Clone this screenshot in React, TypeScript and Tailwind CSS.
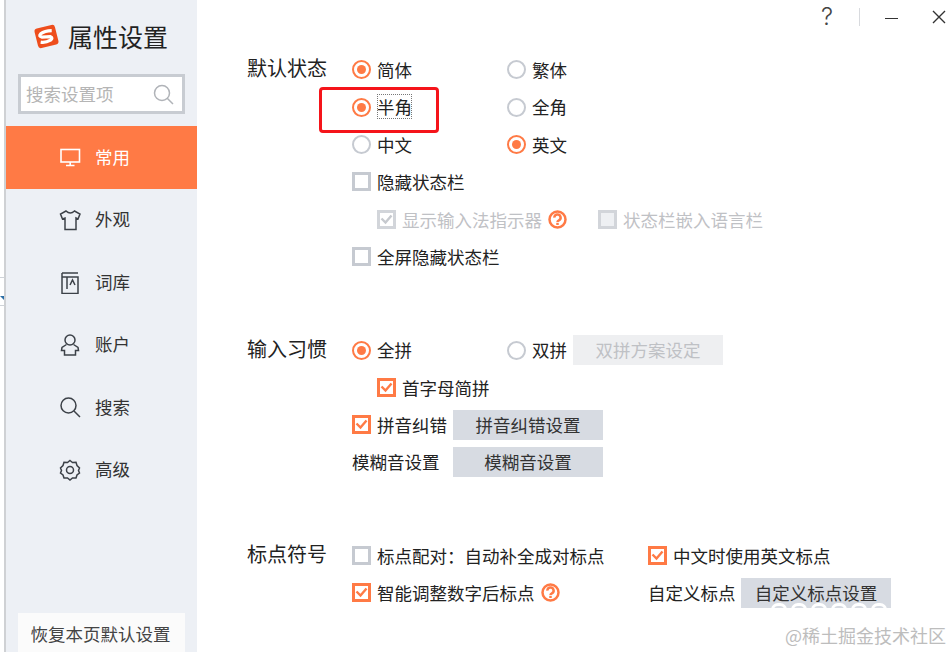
import React from "react";

type LabelProps = {
  text: string;
  checked?: boolean;
  muted?: boolean;
};

function Radio({ text, checked }: LabelProps) {
  return (
    <div className="flex items-center gap-[6px]">
      <div
        className={`flex h-[19px] w-[19px] items-center justify-center rounded-full border-[2.5px] ${
          checked ? "border-[#ff7a45]" : "border-[#c6cad1]"
        }`}
      >
        {checked && <div className="h-[9px] w-[9px] rounded-full bg-[#ff7a45]"></div>}
      </div>
      <span>{text}</span>
    </div>
  );
}

function Checkbox({ text, checked, muted }: LabelProps) {
  const border = muted ? "border-[#d2d5da]" : checked ? "border-[#ff7a45]" : "border-[#c6cad1]";
  return (
    <div className={`flex items-center gap-[6px] ${muted ? "text-[#bfc1c5]" : ""}`}>
      <div className={`flex h-[19px] w-[19px] items-center justify-center border-[3px] ${border} ${muted && !checked ? "bg-[#eef0f3]" : ""}`}>
        {checked && (
          <svg width="13" height="13" viewBox="0 0 13 13" fill="none">
            <path d="M1.5 5.5 L5.5 9.5 L11.5 2.5" stroke={muted ? "#c6c9ce" : "#ff7a45"} strokeWidth="2.4" />
          </svg>
        )}
      </div>
      <span>{text}</span>
    </div>
  );
}

function Help() {
  return (
    <svg width="19" height="19" viewBox="0 0 19 19" fill="none" stroke="#ff7a45" strokeWidth="2.5">
      <circle cx="9.5" cy="9.5" r="8" />
      <path d="M6.4 7.6 A3.1 3.1 0 1 1 10.9 10.3 Q9.5 11 9.5 12" />
      <path d="M9.5 12.8 V15" />
    </svg>
  );
}

function Button({ text, disabled, width = "w-[150px]" }: { text: string; disabled?: boolean; width?: string }) {
  return (
    <div
      className={`flex h-[30px] items-center justify-center ${width} ${
        disabled ? "bg-[#eeeff1] text-[#bfc1c5]" : "bg-[#d7dbe2] text-[#333]"
      }`}
    >
      {text}
    </div>
  );
}

const stroke = { fill: "none", stroke: "#3c4148", strokeWidth: 1.5 };

const navItems = [
  {
    label: "外观",
    icon: (
      <svg width="22" height="22" viewBox="0 0 22 22" {...stroke}>
        <path d="M7 2 L1.5 5 L3.5 10 L6 9 V20.5 H17 V9 L19 10 L21 5 L15.5 2 Q11.3 6 7 2 Z" />
      </svg>
    ),
  },
  {
    label: "词库",
    icon: (
      <svg width="22" height="22" viewBox="0 0 22 22" {...stroke}>
        <path d="M3 1 H19 M3 1 V21.5 H19 V5 H8 V17 M3 5 H8" />
        <path d="M11 13 L13.5 8 L16 13" />
      </svg>
    ),
  },
  {
    label: "账户",
    icon: (
      <svg width="22" height="22" viewBox="0 0 22 22" {...stroke}>
        <circle cx="11" cy="6" r="5" />
        <path d="M7.5 10.5 L3 13.5 L2.5 16.5 H5.5 V21 H16.5 V16.5 H19.5 L19 13.5 L14.5 10.5" />
      </svg>
    ),
  },
  {
    label: "搜索",
    icon: (
      <svg width="22" height="22" viewBox="0 0 22 22" {...stroke}>
        <circle cx="9.5" cy="9.5" r="7.5" />
        <path d="M15 15 L21 21" />
      </svg>
    ),
  },
  {
    label: "高级",
    icon: (
      <svg width="22" height="22" viewBox="0 0 22 22" {...stroke}>
        <path d="M11 1.5 L13.5 3.5 L17 3.3 L18 6.5 L20.5 9 L19.5 11.5 L20.5 14 L18 16 L17 19 L13.5 19 L11 21 L8.5 19 L5 19 L4 16 L1.5 14 L2.5 11.5 L1.5 9 L4 6.5 L5 3.3 L8.5 3.5 Z" />
        <circle cx="11" cy="11" r="3.5" />
      </svg>
    ),
  },
];

function Sidebar() {
  return (
    <aside className="flex h-full w-[191px] shrink-0 flex-col bg-[#edf0f5] text-[#333]">
      <div className="flex h-[74px] items-center pl-[27px] pb-[2px]">
        <svg width="27" height="27" viewBox="0 0 27 27">
          <g transform="rotate(-14 13.5 13.5)">
            <rect x="3" y="3.5" width="21" height="20" rx="3" fill="#ee4d1c" />
            <path d="M20 9 Q13 7.5 8.5 9.5 Q5.5 11.5 9 13 L17 14.5 Q20 16.5 16.5 18 Q11 19.5 6.5 17.5" fill="none" stroke="#fff" strokeWidth="3.2" />
          </g>
        </svg>
        <span className="ml-[8px] text-[25px] leading-none text-[#222]">属性设置</span>
      </div>
      <div className="mx-[12px] flex h-[40px] items-center justify-between border-[3px] border-[#c8ccd2] bg-white pl-[5px] pr-[8px] text-[#b5b5b5]">
        <span>搜索设置项</span>
        <svg width="21" height="21" viewBox="0 0 21 21" fill="none" stroke="#b0b3b8" strokeWidth="1.5">
          <circle cx="9" cy="9" r="7.5" />
          <path d="M14 14 L20 20" />
        </svg>
      </div>
      <nav className="mt-[12px] flex flex-col">
        <div className="flex h-[63px] items-center gap-[14px] bg-[#ff7a45] pl-[54px] text-white">
          <svg width="21" height="19" viewBox="0 0 21 19" fill="none" stroke="#fff" strokeWidth="1.6">
            <rect x="1" y="1.5" width="18.5" height="12.5" />
            <path d="M10.2 14 V17.5 M6 17.5 H14.5" />
          </svg>
          <span className="pb-[2px]">常用</span>
        </div>
        {navItems.map((item) => (
          <div key={item.label} className="flex h-[62.4px] items-center gap-[14px] pl-[53px]">
            {item.icon}
            <span className="pb-[2px]">{item.label}</span>
          </div>
        ))}
      </nav>
      <div className="mx-[12px] mt-auto flex h-[39px] items-center justify-center bg-[#fbfbfb] pt-[3px] pr-[2px] text-[#444]">
        恢复本页默认设置
      </div>
    </aside>
  );
}

function Section({ title, children }: { title: string; children: React.ReactNode }) {
  return (
    <section className="flex">
      <h3 className="flex h-[37.4px] w-[105px] shrink-0 items-center pb-[3px] text-[20px] text-[#222]">{title}</h3>
      <div className="flex flex-col">{children}</div>
    </section>
  );
}

function Row({ children }: { children: React.ReactNode }) {
  return <div className="flex h-[37.4px] items-center">{children}</div>;
}

export default function App() {
  return (
    <div className="relative flex h-[652px] w-[952px] overflow-hidden bg-white font-['Noto_Sans_CJK_SC','Noto_Sans',sans-serif] text-[17.5px] leading-none text-[#222]">
      <div className="h-full w-[6px] shrink-0 border-r-2 border-[#cfd1d4] pt-[277px]">
        <div className="flex h-[29px] items-end border-y border-[#cfd3d8] bg-white pb-[5px]">
          <svg width="4" height="4" viewBox="0 0 4 4">
            <path d="M0 0 H4 V4 Z" fill="#2b6ea6" />
          </svg>
        </div>
      </div>
      <Sidebar />

      <main className="flex-1 pl-[50px] pt-[51px]">
        <Section title="默认状态">
          <Row>
            <div className="w-[155px]"><Radio text="简体" checked /></div>
            <Radio text="繁体" />
          </Row>
          <Row>
            <div className="w-[155px]"><Radio text="半角" checked /></div>
            <Radio text="全角" />
          </Row>
          <Row>
            <div className="w-[155px]"><Radio text="中文" /></div>
            <Radio text="英文" checked />
          </Row>
          <Row><Checkbox text="隐藏状态栏" /></Row>
          <Row>
            <div className="ml-[25px] flex w-[221px] items-center gap-[6px]">
              <Checkbox text="显示输入法指示器" checked muted />
              <Help />
            </div>
            <Checkbox text="状态栏嵌入语言栏" muted />
          </Row>
          <Row><Checkbox text="全屏隐藏状态栏" /></Row>
        </Section>

        <div className="mt-[56px]">
          <Section title="输入习惯">
            <Row>
              <div className="w-[155px]"><Radio text="全拼" checked /></div>
              <Radio text="双拼" />
              <div className="ml-[6px]"><Button text="双拼方案设定" disabled /></div>
            </Row>
            <Row><div className="ml-[25px]"><Checkbox text="首字母简拼" checked /></div></Row>
            <Row>
              <div className="w-[101px]"><Checkbox text="拼音纠错" checked /></div>
              <Button text="拼音纠错设置" />
            </Row>
            <Row>
              <div className="w-[101px]">模糊音设置</div>
              <Button text="模糊音设置" />
            </Row>
          </Section>
        </div>

        <div className="mt-[56px]">
          <Section title="标点符号">
            <Row>
              <div className="w-[296px]"><Checkbox text="标点配对：自动补全成对标点" /></div>
              <Checkbox text="中文时使用英文标点" checked />
            </Row>
            <Row>
              <div className="flex w-[296px] items-center gap-[6px]">
                <Checkbox text="智能调整数字后标点" checked />
                <Help />
              </div>
              <div className="w-[93px]">自定义标点</div>
              <Button text="自定义标点设置" />
            </Row>
          </Section>
        </div>
      </main>

      {/* window buttons */}
      <div className="absolute right-[6px] top-[6px] flex h-[22px] items-center text-[#444]">
        <span className="mr-[26px] font-['Inter',sans-serif] text-[24px] font-light">?</span>
        <div className="mr-[25px] h-[18px] w-px bg-[#d8dade]"></div>
        <div className="mr-[34px] mt-[3px] h-[1.5px] w-[13px] bg-[#333]"></div>
        <svg width="14" height="14" viewBox="0 0 14 14" stroke="#333" strokeWidth="1.4">
          <path d="M1 1 L13 13 M13 1 L1 13" />
        </svg>
      </div>

      {/* red highlight and focus ring drawn over the form */}
      <div className="absolute left-[319px] top-[87px] h-[46px] w-[120px] rounded-[4px] border-[3px] border-[#f5141a]"></div>
      <div className="absolute left-[377px] top-[94px] h-[25px] w-[35px] border border-dotted border-[#777]"></div>

      {/* watermark */}
      <div className="absolute left-[785px] top-[626px] text-[18px] text-[#bdbdbd]">@稀土掘金技术社区</div>
      <div className="absolute left-[771px] top-[603px] flex h-[6px] w-[120px] gap-[4px] overflow-hidden">
        {[0, 1, 2, 3, 4, 5].map((i) => (
          <div key={i} className="h-[14px] w-[16px] shrink-0 rounded-full border-[3px] border-white"></div>
        ))}
      </div>
    </div>
  );
}
